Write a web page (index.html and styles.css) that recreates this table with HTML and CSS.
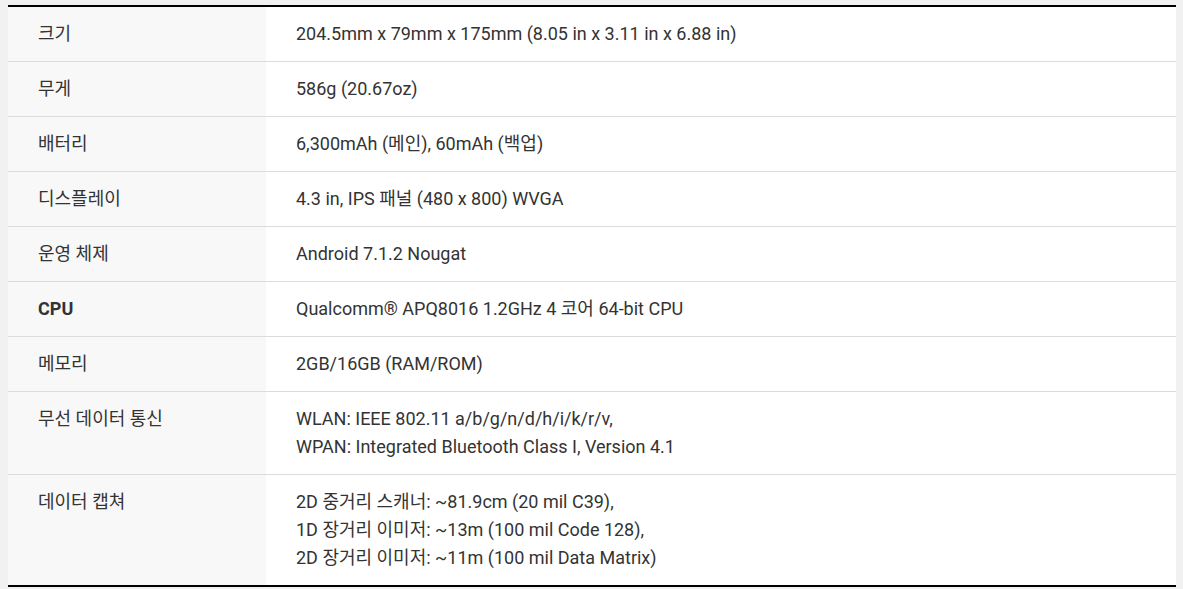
FILE: index.html
```html
<!DOCTYPE html>
<html lang="ko">
<head>
<meta charset="utf-8">
<link rel="stylesheet" href="styles.css">
</head>
<body>
<table class="spec">
  <tr><th>크기</th><td>204.5mm x 79mm x 175mm (8.05 in x 3.11 in x 6.88 in)</td></tr>
  <tr><th>무게</th><td>586g (20.67oz)</td></tr>
  <tr><th>배터리</th><td>6,300mAh (메인), 60mAh (백업)</td></tr>
  <tr><th>디스플레이</th><td>4.3 in, IPS 패널 (480 x 800) WVGA</td></tr>
  <tr><th>운영 체제</th><td>Android 7.1.2 Nougat</td></tr>
  <tr><th class="bold">CPU</th><td>Qualcomm® APQ8016 1.2GHz 4 코어 64-bit CPU</td></tr>
  <tr><th>메모리</th><td>2GB/16GB (RAM/ROM)</td></tr>
  <tr><th>무선 데이터 통신</th><td>WLAN: IEEE 802.11 a/b/g/n/d/h/i/k/r/v,<br>WPAN: Integrated Bluetooth Class I, Version 4.1</td></tr>
  <tr><th>데이터 캡쳐</th><td>2D 중거리 스캐너: ~81.9cm (20 mil C39),<br>1D 장거리 이미저: ~13m (100 mil Code 128),<br>2D 장거리 이미저: ~11m (100 mil Data Matrix)</td></tr>
</table>
</body>
</html>
```
FILE: styles.css
```css
html, body {
  margin: 0;
  padding: 0;
  background: #f1f1f1;
}
body {
  padding: 5px 7px 0 8px;
  font-family: Roboto, "Noto Sans CJK KR", sans-serif;
  color: #333;
}
.spec {
  width: 1168px;
  border-collapse: collapse;
  border-top: 2px solid #000;
  border-bottom: 2px solid #000;
  background: #fff;
  font-size: 18px;
  line-height: 28px;
}
.spec th, .spec td {
  vertical-align: top;
  text-align: left;
  padding: 13px 0 13px 30px;
  border-bottom: 1px solid #dcdcdc;
}
.spec tr:last-child th, .spec tr:last-child td {
  border-bottom: none;
}
.spec th {
  width: 228px;
  background: #f8f8f8;
  font-weight: 400;
}
.spec th.bold {
  font-weight: 700;
}
```
